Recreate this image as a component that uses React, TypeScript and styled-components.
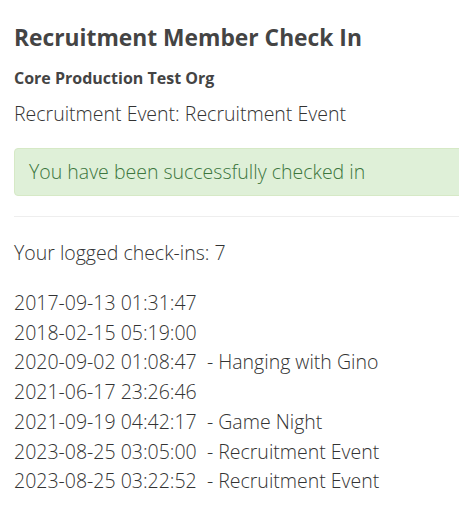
import React from 'react';
import styled, { createGlobalStyle } from 'styled-components';

const GlobalStyle = createGlobalStyle`
  html, body {
    margin: 0;
    padding: 0;
    background: #fff;
    overflow: hidden;
  }
  body {
    font-family: "Open Sans", "Liberation Sans", sans-serif;
    color: #333;
  }
`

const Page = styled.div`
  width: 470px;
  padding: 0 0 0 14px;
`

const Title = styled.h1`
  margin: 24px 0 0;
  font-size: 22.8px;
  line-height: 28px;
  font-weight: 700;
  color: #444;
`

const OrgName = styled.h4`
  margin: 16px 0 0;
  font-size: 16px;
  line-height: 20px;
  font-weight: 700;
  color: #444;
`

const Text = styled.p<{ $top: number }>`
  margin: ${p => p.$top}px 0 0;
  font-size: 19.5px;
  line-height: 26px;
  font-weight: 300;
`

const Alert = styled.div`
  margin-top: 21px;
  padding: 10px 14px;
  font-size: 19.5px;
  line-height: 26px;
  font-weight: 300;
  color: #3c763d;
  background: #dff0d8;
  border: 1px solid #d6e9c6;
  border-radius: 4px;
`

const Divider = styled.hr`
  margin: 20px 0 0;
  border: 0;
  border-top: 1px solid #eee;
`

const CheckInList = styled.ul`
  list-style: none;
  margin: 22px 0 0;
  padding: 0;
`

const CheckInRow = styled.li`
  font-size: 19.5px;
  line-height: 29.7px;
  font-weight: 300;
  white-space: pre;
`

const checkIns = [
    { time: '2017-09-13 01:31:47' },
    { time: '2018-02-15 05:19:00' },
    { time: '2020-09-02 01:08:47', event: 'Hanging with Gino' },
    { time: '2021-06-17 23:26:46' },
    { time: '2021-09-19 04:42:17', event: 'Game Night' },
    { time: '2023-08-25 03:05:00', event: 'Recruitment Event' },
    { time: '2023-08-25 03:22:52', event: 'Recruitment Event' },
]

export default function App() {
    return (
        <Page>
            <GlobalStyle />
            <Title>Recruitment Member Check In</Title>
            <OrgName>Core Production Test Org</OrgName>
            <Text $top={13}>Recruitment Event: Recruitment Event</Text>
            <Alert>You have been successfully checked in</Alert>
            <Divider />
            <Text $top={23}>Your logged check-ins: {checkIns.length}</Text>
            <CheckInList>
                {checkIns.map((row, i) => (
                    <CheckInRow key={i}>
                        {row.time}{row.event ? `  - ${row.event}` : ''}
                    </CheckInRow>
                ))}
            </CheckInList>
        </Page>
    )
}
